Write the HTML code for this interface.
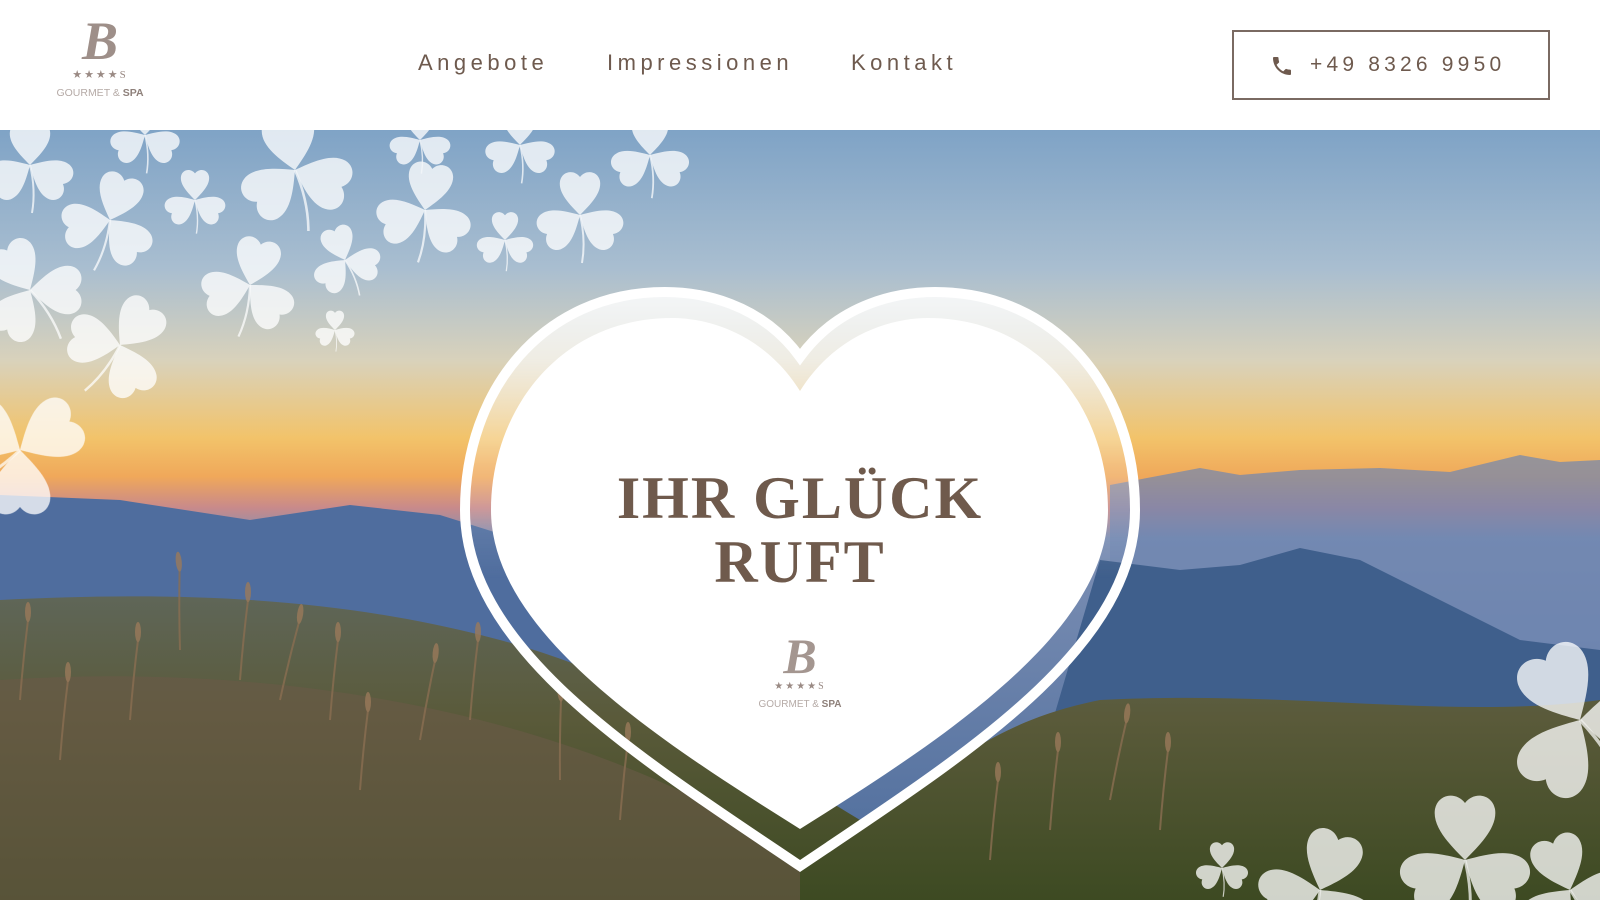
<!DOCTYPE html>
<html><head><meta charset="utf-8">
<style>
*{margin:0;padding:0;box-sizing:border-box}
html,body{width:1600px;height:900px;overflow:hidden}
body{position:relative;background:#fff;font-family:"Liberation Sans",sans-serif}
header{position:absolute;left:0;top:0;width:1600px;height:130px;background:#fff}
.nav a{position:absolute;top:50px;font-size:22px;letter-spacing:4.5px;color:#6e5a4e;text-decoration:none}
.btn{position:absolute;left:1232px;top:30px;width:318px;height:70px;border:2px solid #7a6a62}
.btn span{position:absolute;left:76px;top:21px;font-size:21px;letter-spacing:4.2px;color:#6e5a4e}
.logo{position:absolute;text-align:center;color:#9a8a84}
svg{overflow:hidden}
</style></head><body>
<header>
 <div class="logo" style="left:50px;top:14px;width:100px">
  <div style="font-family:'Liberation Serif',serif;font-style:italic;font-size:54px;line-height:54px;font-weight:bold;color:#9e8f89">B</div>
  <div style="font-size:11px;letter-spacing:2px;line-height:14px">★★★★<span style="font-family:'Liberation Serif',serif">S</span></div>
  <div style="font-size:10.5px;color:#b5aaa6;margin-top:5px;white-space:nowrap">GOURMET &amp; <b style="color:#8e807a">SPA</b></div>
 </div>
 <div class="nav"><a style="left:418px">Angebote</a><a style="left:607px">Impressionen</a><a style="left:851px">Kontakt</a></div>
 <div class="btn"><svg style="position:absolute;left:36px;top:22px" width="24" height="24" viewBox="0 0 24 24"><path fill="#6e5a4e" d="M6.6 10.8c1.4 2.8 3.8 5.1 6.6 6.6l2.2-2.2c.3-.3.7-.4 1-.2 1.1.4 2.3.6 3.6.6.6 0 1 .4 1 1V20c0 .6-.4 1-1 1C10.6 21 3 13.4 3 4c0-.6.4-1 1-1h3.5c.6 0 1 .4 1 1 0 1.3.2 2.5.6 3.6.1.3 0 .7-.2 1z"/></svg><span>+49 8326 9950</span></div>
</header>
<svg style="position:absolute;left:0;top:130px;display:block" width="1600" height="770" viewBox="0 130 1600 770">
<defs>
 <linearGradient id="sky" x1="0" y1="0" x2="0" y2="1">
  <stop offset="0" stop-color="#7fa3c6"/><stop offset=".18" stop-color="#a9bed0"/>
  <stop offset=".3" stop-color="#d9d2bb"/><stop offset=".4" stop-color="#f2c36a"/>
  <stop offset=".45" stop-color="#f0a85a"/><stop offset=".49" stop-color="#c98a8a"/>
  <stop offset=".53" stop-color="#7c8fb4"/><stop offset="1" stop-color="#4a6a9a"/>
 </linearGradient>
 <linearGradient id="grass" x1="0" y1="0" x2="0" y2="1">
  <stop offset="0" stop-color="#5f6658"/><stop offset=".4" stop-color="#5a5a3a"/><stop offset="1" stop-color="#3d4a22"/>
 </linearGradient>
 <linearGradient id="ring" x1="0" y1="0" x2="0" y2="1">
  <stop offset="0" stop-color="#fff" stop-opacity=".85"/><stop offset=".3" stop-color="#fff" stop-opacity=".2"/><stop offset=".5" stop-color="#fff" stop-opacity="0"/>
 </linearGradient>
 <g id="leaf"><path d="M0,0 C-10,-10 -22,-22 -20,-34 C-18,-44 -6,-46 0,-38 C6,-46 18,-44 20,-34 C22,-22 10,-10 0,0Z"/></g>
 <g id="cl" fill="#fff" fill-opacity=".85"><use href="#leaf"/><use href="#leaf" transform="rotate(120)"/><use href="#leaf" transform="rotate(240)"/><path d="M0,0 Q6,25 2,48" stroke="#fff" stroke-opacity=".8" stroke-width="2" fill="none"/></g>
 <g id="gr" stroke="#8a6e52" stroke-width="2" fill="none"><path d="M0,0 Q3,-40 8,-80"/><ellipse cx="8" cy="-88" rx="3" ry="10" fill="#9a7a5a" stroke="none"/></g>
</defs>
<rect x="0" y="130" width="1600" height="770" fill="url(#sky)"/>
<path d="M1110,485 L1200,468 L1240,475 L1300,470 L1380,468 L1450,472 L1520,455 L1560,462 L1600,460 L1600,900 L1110,900Z" fill="#6f86b0" opacity=".7"/>
<path d="M0,495 L120,500 L250,520 L350,505 L440,515 L520,540 L600,560 L800,900 L0,900Z" fill="#4f6d9e"/>
<path d="M1100,560 L1180,570 L1240,565 L1300,548 L1360,560 L1460,610 L1520,640 L1600,650 L1600,900 L1000,900Z" fill="#3f5f8c"/>
<path d="M0,600 C200,590 350,600 500,640 C650,680 760,760 860,820 C960,760 1000,720 1100,700 C1300,690 1450,720 1600,700 L1600,900 L0,900Z" fill="url(#grass)"/>
<path d="M0,680 C300,660 600,720 800,860 L800,900 L0,900Z" fill="#6b5a48" opacity=".6"/>
<g opacity=".8">
<use href="#gr" transform="translate(240,680)"/><use href="#gr" transform="translate(280,700) rotate(8)"/><use href="#gr" transform="translate(130,720)"/><use href="#gr" transform="translate(180,650) rotate(-6)"/><use href="#gr" transform="translate(330,720)"/><use href="#gr" transform="translate(420,740) rotate(5)"/><use href="#gr" transform="translate(470,720)"/><use href="#gr" transform="translate(60,760)"/><use href="#gr" transform="translate(560,780) rotate(-5)"/><use href="#gr" transform="translate(620,820)"/><use href="#gr" transform="translate(1050,830)"/><use href="#gr" transform="translate(1110,800) rotate(6)"/><use href="#gr" transform="translate(1160,830)"/><use href="#gr" transform="translate(990,860)"/><use href="#gr" transform="translate(360,790)"/><use href="#gr" transform="translate(20,700)"/>
</g>
<g opacity=".9">
<use href="#cl" transform="translate(30,165) scale(1)"/>
<use href="#cl" transform="translate(110,220) scale(1.1) rotate(20)"/>
<use href="#cl" transform="translate(195,200) scale(.7)"/>
<use href="#cl" transform="translate(295,170) scale(1.3) rotate(-10)"/>
<use href="#cl" transform="translate(145,135) scale(.8)"/>
<use href="#cl" transform="translate(250,285) scale(1.1) rotate(15)"/>
<use href="#cl" transform="translate(345,260) scale(.8) rotate(-20)"/>
<use href="#cl" transform="translate(425,210) scale(1.1) rotate(10)"/>
<use href="#cl" transform="translate(505,240) scale(.65)"/>
<use href="#cl" transform="translate(580,215) scale(1)"/>
<use href="#cl" transform="translate(650,155) scale(.9)"/>
<use href="#cl" transform="translate(520,145) scale(.8)"/>
<use href="#cl" transform="translate(420,140) scale(.7)"/>
<use href="#cl" transform="translate(120,345) scale(1.2) rotate(40)"/>
<use href="#cl" transform="translate(30,290) scale(1.2) rotate(-30)"/>
<use href="#cl" transform="translate(335,330) scale(.45)"/>
<use href="#cl" transform="translate(20,450) scale(1.5) rotate(60)"/>
<use href="#cl" transform="translate(1580,720) scale(1.8) rotate(-30)"/>
<use href="#cl" transform="translate(1465,860) scale(1.5)"/>
<use href="#cl" transform="translate(1320,890) scale(1.4) rotate(20)"/>
<use href="#cl" transform="translate(1222,868) scale(.6)"/>
<use href="#cl" transform="translate(1570,890) scale(1.3) rotate(-20)"/>
</g>
<path d="M800,357 C760,302 700,292 665,292 C543,292 465,390 465,510 C465,650 640,758 800,866 C960,758 1135,650 1135,510 C1135,390 1057,292 935,292 C900,292 840,302 800,357Z" fill="url(#ring)" stroke="#fff" stroke-width="10"/>
<path d="M800,391 C765,335 710,318 672,318 C560,318 491,410 491,510 C491,630 650,735 800,829 C950,735 1108,630 1108,510 C1108,410 1040,318 928,318 C890,318 835,335 800,391Z" fill="#fff"/>
</svg>
<div style="position:absolute;left:500px;top:466px;width:600px;text-align:center;font-family:'Liberation Serif',serif;font-weight:bold;font-size:60px;line-height:64px;letter-spacing:2px;color:#6f5a4c">IHR GLÜCK<br>RUFT</div>
<div class="logo" style="left:750px;top:632px;width:100px">
  <div style="font-family:'Liberation Serif',serif;font-style:italic;font-size:50px;line-height:48px;font-weight:bold;color:#a49690">B</div>
  <div style="font-size:10px;letter-spacing:2px;line-height:14px">★★★★<span style="font-family:'Liberation Serif',serif">S</span></div>
  <div style="font-size:10px;color:#b5aaa6;margin-top:5px;white-space:nowrap">GOURMET &amp; <b style="color:#8e807a">SPA</b></div>
</div>
</body></html>
